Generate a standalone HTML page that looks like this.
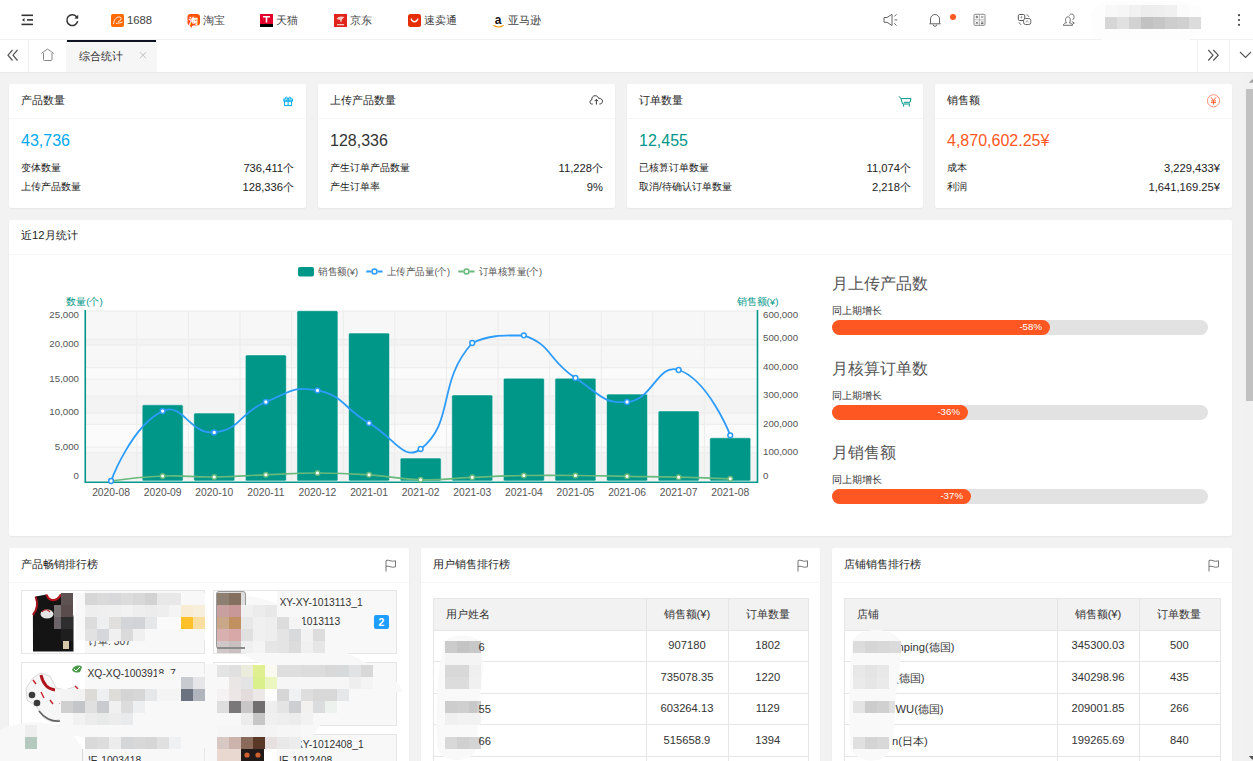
<!DOCTYPE html>
<html><head><meta charset="utf-8">
<style>
*{box-sizing:border-box;margin:0;padding:0}
html,body{width:1253px;height:761px;overflow:hidden;background:#f2f2f2;font-family:"Liberation Sans",sans-serif;color:#333}
.abs{position:absolute}
#top{position:absolute;left:0;top:0;width:1253px;height:40px;background:#fff;border-bottom:1px solid #f0f0f0}
#tabs{position:absolute;left:0;top:40px;width:1253px;height:33px;background:#fff;border-bottom:1px solid #e8e8e8}
.brand{position:absolute;top:13px;height:14px;font-size:11.3px;line-height:14px;color:#444;white-space:nowrap}
.card{position:absolute;background:#fff;border-radius:2px;box-shadow:0 1px 2px rgba(0,0,0,.05)}
.ch{position:absolute;left:0;top:0;right:0;height:35px;border-bottom:1px solid #f6f6f6;font-size:11.3px;line-height:32px;padding-left:12px;color:#222}
.big{position:absolute;left:12px;top:127px;font-size:16px;line-height:24px}
.row{position:absolute;left:12px;right:12px;font-size:10.3px;line-height:14px;color:#222}
.row span{position:absolute;right:0;top:0;font-size:11.2px;line-height:14px}
.pg{position:absolute;left:832px;width:376px;height:15px;border-radius:8px;background:#e2e2e2}
.pg div{position:absolute;left:0;top:0;height:15px;border-radius:8px;background:#ff5722}
.pg b{position:absolute;right:8px;top:-1.5px;font-weight:normal;font-size:9.7px;line-height:15px;color:#fff}
.tx{position:absolute;font-size:11.2px;line-height:14px;color:#333;white-space:nowrap}
.tx.c{text-align:center}
</style></head><body>

<!-- TOP BAR -->
<div id="top">
  <svg class="abs" style="left:0;top:0" width="1253" height="40">
    <!-- menu icon -->
    <g stroke="#333" stroke-width="1.6" fill="none">
      <line x1="21.5" y1="15.3" x2="33" y2="15.3"/>
      <line x1="27" y1="19.9" x2="33" y2="19.9"/>
      <line x1="21.5" y1="24.4" x2="33" y2="24.4"/>
    </g>
    <path d="M22,19.9 L24.5,18 L24.5,21.8Z" fill="#333"/>
    <!-- refresh -->
    <path d="M76.8,17.2 A5.4,5.4 0 1 0 77.6,21.2" stroke="#333" stroke-width="1.5" fill="none"/>
    <path d="M78.2,14.8 L78.2,18.8 L74.3,18.4Z" fill="#333"/>
    <!-- 1688 -->
    <rect x="111" y="14" width="13" height="13" rx="2" fill="#ff6a00"/>
    <path d="M113.5,24 C114,19 117,16.5 120,17 C122,17.5 121,21 118,22 M116,23.5 C118,23 121,23 122.5,22" stroke="#fff" stroke-width="0.9" fill="none"/>
    <!-- taobao -->
    <rect x="187.5" y="14" width="12.5" height="11.5" rx="3" fill="#ff5000"/>
    <path d="M190,25 L191,28 L193,25Z" fill="#ff5000"/>
    <text x="193.8" y="23.5" font-size="9" fill="#fff" text-anchor="middle" font-weight="bold">淘</text>
    <!-- tmall -->
    <rect x="260" y="14" width="13" height="10" fill="#e4002b"/>
    <rect x="260" y="24" width="13" height="3" fill="#000"/>
    <path d="M263,16.8 L270,16.8 M266.5,16.8 L266.5,22.5" stroke="#fff" stroke-width="1.6"/>
    <!-- jd -->
    <rect x="334" y="14" width="13" height="13" fill="#e1251b"/>
    <path d="M336.5,19 C338,16 342,16 344.5,17 L342,19.5 L341,23 L340,20 C339,19.5 337.5,19.5 336.5,19Z" fill="#f5c9c6"/>
    <rect x="337" y="24" width="7" height="1.3" fill="#f5c9c6"/>
    <!-- aliexpress -->
    <rect x="408" y="14" width="13" height="13" rx="2.5" fill="#e62e04"/>
    <path d="M411,18.5 C412.5,23 416.5,23 418,18.5" stroke="#fff" stroke-width="1.2" fill="none"/>
    <!-- amazon -->
    <text x="498" y="24" font-size="12" font-weight="bold" fill="#111" text-anchor="middle">a</text>
    <path d="M493.5,25.5 C497,27.5 500.5,27.5 503.5,25.3" stroke="#f90" stroke-width="1.2" fill="none"/>
    <!-- speaker -->
    <path d="M884,17.5 L887,17.5 L892,14.3 L892,25.5 L887,22.3 L884,22.3Z" stroke="#666" stroke-width="1" fill="none" stroke-linejoin="round"/>
    <path d="M894.3,16.5 L896.5,14.3 M894.5,19.9 L897.3,19.9 M894.3,23.3 L896.5,25.5" stroke="#666" stroke-width="1"/>
    <!-- bell -->
    <path d="M930.5,23.8 L930.5,19 A4.5,4.5 0 0 1 939.5,19 L939.5,23.8 M929.3,23.8 L940.7,23.8 M933.2,24.5 A1.8,1.8 0 0 0 936.8,24.5" stroke="#666" stroke-width="1" fill="none"/>
    <circle cx="953" cy="17" r="3" fill="#ff5722"/>
    <!-- calculator -->
    <rect x="974" y="14.3" width="11" height="11" rx="1" stroke="#888" stroke-width="1" fill="none"/>
    <path d="M979.5,14.5 L979.5,25 M974.3,19.8 L984.8,19.8" stroke="#aaa" stroke-width="0.8"/>
    <path d="M975.6,17 L978.2,17 M976.9,15.7 L976.9,18.3 M980.9,17 L983.5,17 M975.9,21.7 L978,23.8 M978,21.7 L975.9,23.8 M980.9,22 L983.5,22 M980.9,23.6 L983.5,23.6" stroke="#555" stroke-width="0.9"/>
    <!-- translate -->
    <rect x="1018.3" y="14.5" width="6.5" height="6" rx="1.3" stroke="#555" stroke-width="1" fill="none"/>
    <rect x="1023.6" y="18.5" width="7.2" height="6" rx="2" stroke="#666" stroke-width="1" fill="#fff"/>
    <path d="M1021.5,16 V18.5 M1020.3,17.3 H1022.7 M1025.8,22.5 L1027.2,20.3 L1028.6,22.5" stroke="#888" stroke-width="0.7" fill="none"/>
    <path d="M1026.5,14.8 C1027.8,15 1028.6,15.8 1028.8,17 M1019,22.3 C1019.2,23.5 1020,24.2 1021.3,24.5" stroke="#666" stroke-width="0.9" fill="none"/>
    <!-- user -->
    <path d="M1069.5,15.5 C1070,14.2 1071,14 1072,14 C1073.5,14 1074.3,15.5 1074,17.5 C1073.8,18.8 1073.2,19.5 1072.5,20" stroke="#666" stroke-width="0.9" fill="none"/>
    <path d="M1066.6,23 C1065,21.5 1065,17 1067.8,16.8 C1070.6,16.6 1071,21 1069.3,23" stroke="#666" stroke-width="0.95" fill="#fff"/>
    <path d="M1063.3,25.3 C1063.6,23.5 1065,23 1066.6,22.8 M1069.3,22.8 C1071,23 1072,23.5 1072.5,25.3 H1063.3" stroke="#666" stroke-width="0.95" fill="none"/>
    <path d="M1071.8,21.5 L1074.3,23 L1072,24.6" stroke="#666" stroke-width="0.9" fill="none"/>
    <!-- kebab -->
    <circle cx="1239" cy="15.2" r="1.1" fill="#444"/>
    <circle cx="1239" cy="20" r="1.1" fill="#444"/>
    <circle cx="1239" cy="24.8" r="1.1" fill="#444"/>
  </svg>
  <div class="brand" style="left:127px">1688</div>
  <div class="brand" style="left:202.5px">淘宝</div>
  <div class="brand" style="left:276px">天猫</div>
  <div class="brand" style="left:349.5px">京东</div>
  <div class="brand" style="left:423.5px">速卖通</div>
  <div class="brand" style="left:507.5px">亚马逊</div>
  <!-- mosaic username -->
  <div class="abs" style="left:1090px;top:1px;width:112px;height:40px;border-radius:20px;background:#fdfdfd"></div>
  <div class="abs" style="left:1105px;top:5px;width:96px;height:12px;display:flex">
    <i style="flex:1;background:#f8f8f8"></i><i style="flex:1;background:#f6f6f6"></i><i style="flex:1;background:#f1f1f1"></i><i style="flex:1;background:#ededed"></i><i style="flex:1;background:#eeeeee"></i><i style="flex:1;background:#f0f0f0"></i><i style="flex:1;background:#fbfbfb"></i><i style="flex:1;background:#fdfdfd"></i>
  </div>
  <div class="abs" style="left:1105px;top:17px;width:96px;height:12px;display:flex">
    <i style="flex:1;background:#d6d6d6"></i><i style="flex:1;background:#e0e0e0"></i><i style="flex:1;background:#d2d2d2"></i><i style="flex:1;background:#c2c2c2"></i><i style="flex:1;background:#c6c6c6"></i><i style="flex:1;background:#cdcdcd"></i><i style="flex:1;background:#d0d0d0"></i><i style="flex:1;background:#dcdcdc"></i>
  </div>
</div>

<!-- TABS -->
<div id="tabs">
  <div class="abs" style="left:28px;top:0;width:1px;height:32px;background:#f0f0f0"></div>
  <div class="abs" style="left:66px;top:0;width:91px;height:32px;background:#f6f6f6"></div>
  <div class="abs" style="left:67px;top:0;width:89px;height:2px;background:#0f1220"></div>
  <div class="abs" style="left:78.5px;top:9px;font-size:11.3px;line-height:14px;color:#333">综合统计</div>
  <div class="abs" style="left:1197px;top:0;width:1px;height:32px;background:#f0f0f0"></div>
  <div class="abs" style="left:1229px;top:0;width:1px;height:32px;background:#f0f0f0"></div>
  <svg class="abs" style="left:0;top:0" width="1253" height="32">
    <path d="M12.5,10 L8,15.2 L12.5,20.5 M17.5,10 L13,15.2 L17.5,20.5" stroke="#555" stroke-width="1.2" fill="none"/>
    <path d="M41.2,13.5 L47.5,9 L53.8,13.5 M43.5,13 V19.5 Q43.5,20.5 44.5,20.5 H51 Q52,20.5 52,19.5 V13" stroke="#888" stroke-width="1" fill="none"/>
    <path d="M140,12.2 L146,18.2 M146,12.2 L140,18.2" stroke="#c2c2c2" stroke-width="1"/>
    <path d="M1208.3,10 L1213,15.2 L1208.3,20.5 M1213.3,10 L1218.2,15.2 L1213.3,20.5" stroke="#555" stroke-width="1.2" fill="none"/>
    <path d="M1240,12 L1245.5,17.5 L1251,12" stroke="#555" stroke-width="1.1" fill="none"/>
  </svg>
</div>

<!-- CARDS -->
<div class="card" style="left:9px;top:84px;width:297px;height:124px">
  <div class="ch">产品数量</div>
  <div class="big" style="top:45px;color:#01aaed">43,736</div>
  <div class="row" style="top:77px">变体数量<span>736,411个</span></div>
  <div class="row" style="top:96px">上传产品数量<span>128,336个</span></div>
</div>
<div class="card" style="left:318px;top:84px;width:297px;height:124px">
  <div class="ch">上传产品数量</div>
  <div class="big" style="top:45px;color:#333">128,336</div>
  <div class="row" style="top:77px">产生订单产品数量<span>11,228个</span></div>
  <div class="row" style="top:96px">产生订单率<span>9%</span></div>
</div>
<div class="card" style="left:627px;top:84px;width:296px;height:124px">
  <div class="ch">订单数量</div>
  <div class="big" style="top:45px;color:#009688">12,455</div>
  <div class="row" style="top:77px">已核算订单数量<span>11,074个</span></div>
  <div class="row" style="top:96px">取消/待确认订单数量<span>2,218个</span></div>
</div>
<div class="card" style="left:935px;top:84px;width:297px;height:124px">
  <div class="ch">销售额</div>
  <div class="big" style="top:45px;color:#ff5722">4,870,602.25¥</div>
  <div class="row" style="top:77px">成本<span>3,229,433¥</span></div>
  <div class="row" style="top:96px">利润<span>1,641,169.25¥</span></div>
</div>


<!-- CARD ICONS -->
<svg class="abs" style="left:0;top:0;pointer-events:none" width="1253" height="120">
  <g stroke="#01aaed" stroke-width="1" fill="none">
    <rect x="283.8" y="99" width="8.6" height="2"/>
    <rect x="284.6" y="101" width="7" height="4.6"/>
    <path d="M288.1,99 V105.6 M288.1,99 C287,96.5 285,96.3 285.6,98.6 M288.1,99 C289.2,96.5 291.2,96.3 290.6,98.6"/>
  </g>
  <path d="M592.8,104 H591.5 C589.5,104 589.5,100 591.8,100 C591.5,97.5 593,95.7 595.2,95.7 C597.3,95.7 598.2,97 598.5,98.2 C601,98.2 602.5,99.6 602.5,101.2 C602.5,103 601.3,104 599.8,104 H599.3 M596.4,104.5 V99.4 M594.6,101.2 L596.4,99.4 L598.2,101.2" stroke="#333" stroke-width="0.95" fill="none"/>
  <path d="M899,96.3 L900.8,98.3 L902.6,104 H910 M901.2,98.6 H911 L910,102.3 H903.8 M903.6,104.3 V106.6 M909.3,104.3 V106.6" stroke="#009688" stroke-width="1" fill="none"/>
  <circle cx="1213.5" cy="100.8" r="6.1" stroke="#ff7a55" stroke-width="0.8" fill="none"/>
  <path d="M1211,97.3 L1213.5,100.5 L1216,97.3 M1211,100.9 H1216 M1211,102.6 H1216 M1213.5,100.5 V104.6" stroke="#ff5722" stroke-width="0.9" fill="none"/>
</svg>

<!-- CHART PANEL -->
<div class="card" style="left:9px;top:220px;width:1223px;height:316px">
  <div class="ch" style="line-height:30px">近12月统计</div>
</div>

<!-- CHART SVG -->
<svg class="abs" style="left:0;top:0;pointer-events:none" width="1253" height="761">
<rect x="85.25" y="447.00" width="672.25" height="34.00" fill="rgba(170,170,170,0.07)"/>
<rect x="85.25" y="413.00" width="672.25" height="34.00" fill="rgba(170,170,170,0.028)"/>
<rect x="85.25" y="379.00" width="672.25" height="34.00" fill="rgba(170,170,170,0.07)"/>
<rect x="85.25" y="345.00" width="672.25" height="34.00" fill="rgba(170,170,170,0.028)"/>
<rect x="85.25" y="311.00" width="672.25" height="34.00" fill="rgba(170,170,170,0.07)"/>
<rect x="85.25" y="452.67" width="672.25" height="28.33" fill="rgba(170,170,170,0.07)"/>
<rect x="85.25" y="424.33" width="672.25" height="28.33" fill="rgba(170,170,170,0.028)"/>
<rect x="85.25" y="396.00" width="672.25" height="28.33" fill="rgba(170,170,170,0.07)"/>
<rect x="85.25" y="367.67" width="672.25" height="28.33" fill="rgba(170,170,170,0.028)"/>
<rect x="85.25" y="339.33" width="672.25" height="28.33" fill="rgba(170,170,170,0.07)"/>
<rect x="85.25" y="311.00" width="672.25" height="28.33" fill="rgba(170,170,170,0.028)"/>
<path d="M85.25,311.00 H757.50 M85.25,345.00 H757.50 M85.25,379.00 H757.50 M85.25,413.00 H757.50 M85.25,447.00 H757.50 M85.25,339.33 H757.50 M85.25,367.67 H757.50 M85.25,396.00 H757.50 M85.25,424.33 H757.50 M85.25,452.67 H757.50 M136.85,311.0 V481.0 M188.45,311.0 V481.0 M240.05,311.0 V481.0 M291.65,311.0 V481.0 M343.25,311.0 V481.0 M394.85,311.0 V481.0 M446.45,311.0 V481.0 M498.05,311.0 V481.0 M549.65,311.0 V481.0 M601.25,311.0 V481.0 M652.85,311.0 V481.0 M704.45,311.0 V481.0" stroke="#ececec" stroke-width="1" fill="none"/>
<path d="M142.15,479.5 V406.30 Q142.15,404.80 143.65,404.80 H181.65 Q183.15,404.80 183.15,406.30 V479.5 Q183.15,481.00 181.65,481.00 H143.65 Q142.15,481.00 142.15,479.50 Z" fill="#009688" stroke="rgba(255,255,255,0.7)" stroke-width="0.8"/>
<path d="M193.75,479.5 V414.50 Q193.75,413.00 195.25,413.00 H233.25 Q234.75,413.00 234.75,414.50 V479.5 Q234.75,481.00 233.25,481.00 H195.25 Q193.75,481.00 193.75,479.50 Z" fill="#009688" stroke="rgba(255,255,255,0.7)" stroke-width="0.8"/>
<path d="M245.35,479.5 V356.40 Q245.35,354.90 246.85,354.90 H284.85 Q286.35,354.90 286.35,356.40 V479.5 Q286.35,481.00 284.85,481.00 H246.85 Q245.35,481.00 245.35,479.50 Z" fill="#009688" stroke="rgba(255,255,255,0.7)" stroke-width="0.8"/>
<path d="M296.95,479.5 V312.20 Q296.95,310.70 298.45,310.70 H336.45 Q337.95,310.70 337.95,312.20 V479.5 Q337.95,481.00 336.45,481.00 H298.45 Q296.95,481.00 296.95,479.50 Z" fill="#009688" stroke="rgba(255,255,255,0.7)" stroke-width="0.8"/>
<path d="M348.55,479.5 V334.50 Q348.55,333.00 350.05,333.00 H388.05 Q389.55,333.00 389.55,334.50 V479.5 Q389.55,481.00 388.05,481.00 H350.05 Q348.55,481.00 348.55,479.50 Z" fill="#009688" stroke="rgba(255,255,255,0.7)" stroke-width="0.8"/>
<path d="M400.15,479.5 V459.50 Q400.15,458.00 401.65,458.00 H439.65 Q441.15,458.00 441.15,459.50 V479.5 Q441.15,481.00 439.65,481.00 H401.65 Q400.15,481.00 400.15,479.50 Z" fill="#009688" stroke="rgba(255,255,255,0.7)" stroke-width="0.8"/>
<path d="M451.75,479.5 V396.40 Q451.75,394.90 453.25,394.90 H491.25 Q492.75,394.90 492.75,396.40 V479.5 Q492.75,481.00 491.25,481.00 H453.25 Q451.75,481.00 451.75,479.50 Z" fill="#009688" stroke="rgba(255,255,255,0.7)" stroke-width="0.8"/>
<path d="M503.35,479.5 V379.70 Q503.35,378.20 504.85,378.20 H542.85 Q544.35,378.20 544.35,379.70 V479.5 Q544.35,481.00 542.85,481.00 H504.85 Q503.35,481.00 503.35,479.50 Z" fill="#009688" stroke="rgba(255,255,255,0.7)" stroke-width="0.8"/>
<path d="M554.95,479.5 V379.70 Q554.95,378.20 556.45,378.20 H594.45 Q595.95,378.20 595.95,379.70 V479.5 Q595.95,481.00 594.45,481.00 H556.45 Q554.95,481.00 554.95,479.50 Z" fill="#009688" stroke="rgba(255,255,255,0.7)" stroke-width="0.8"/>
<path d="M606.55,479.5 V395.60 Q606.55,394.10 608.05,394.10 H646.05 Q647.55,394.10 647.55,395.60 V479.5 Q647.55,481.00 646.05,481.00 H608.05 Q606.55,481.00 606.55,479.50 Z" fill="#009688" stroke="rgba(255,255,255,0.7)" stroke-width="0.8"/>
<path d="M658.15,479.5 V412.40 Q658.15,410.90 659.65,410.90 H697.65 Q699.15,410.90 699.15,412.40 V479.5 Q699.15,481.00 697.65,481.00 H659.65 Q658.15,481.00 658.15,479.50 Z" fill="#009688" stroke="rgba(255,255,255,0.7)" stroke-width="0.8"/>
<path d="M709.75,479.5 V439.30 Q709.75,437.80 711.25,437.80 H749.25 Q750.75,437.80 750.75,439.30 V479.5 Q750.75,481.00 749.25,481.00 H711.25 Q709.75,481.00 709.75,479.50 Z" fill="#009688" stroke="rgba(255,255,255,0.7)" stroke-width="0.8"/>
<path d="M85.25,310.0 V482.3 H757.5 V310.0" stroke="#009688" stroke-width="1.6" fill="none"/>
<path d="M111.05,481.00 C111.05,481.00 136.79,477.00 162.65,476.00 C188.39,475.00 188.46,477.30 214.25,477.00 C240.06,476.70 240.05,475.80 265.85,474.80 C291.65,473.80 291.65,473.00 317.45,473.00 C343.25,473.00 343.30,473.10 369.05,474.80 C394.90,476.50 394.80,479.17 420.65,479.80 C446.40,480.42 446.44,478.38 472.25,477.30 C498.04,476.23 498.04,475.95 523.85,475.50 C549.64,475.05 549.65,475.30 575.45,475.50 C601.25,475.70 601.25,475.88 627.05,476.30 C652.85,476.73 652.85,476.58 678.65,477.20 C704.45,477.83 730.25,478.80 730.25,478.80" stroke="#68b97c" stroke-width="1.7" fill="none"/>
<path d="M111.05,481.00 C111.05,481.00 131.23,425.89 162.65,411.10 C182.83,401.59 189.36,434.60 214.25,432.40 C240.96,430.05 238.45,413.15 265.85,402.00 C290.05,392.15 293.51,385.50 317.45,390.40 C345.11,396.05 342.52,408.04 369.05,423.10 C394.12,437.34 403.69,462.17 420.65,449.00 C455.29,422.12 436.48,382.41 472.25,343.00 C488.08,335.30 501.26,335.30 523.85,335.30 C552.86,345.14 547.55,359.97 575.45,378.00 C599.15,393.32 602.09,403.94 627.05,402.00 C653.69,399.94 656.88,362.98 678.65,370.00 C708.48,379.63 730.25,435.30 730.25,435.30" stroke="#2b9bfc" stroke-width="1.8" fill="none"/>
<circle cx="111.05" cy="481.00" r="2.3" fill="#fff" stroke="#68b97c" stroke-width="1.4"/>
<circle cx="162.65" cy="476.00" r="2.3" fill="#fff" stroke="#68b97c" stroke-width="1.4"/>
<circle cx="214.25" cy="477.00" r="2.3" fill="#fff" stroke="#68b97c" stroke-width="1.4"/>
<circle cx="265.85" cy="474.80" r="2.3" fill="#fff" stroke="#68b97c" stroke-width="1.4"/>
<circle cx="317.45" cy="473.00" r="2.3" fill="#fff" stroke="#68b97c" stroke-width="1.4"/>
<circle cx="369.05" cy="474.80" r="2.3" fill="#fff" stroke="#68b97c" stroke-width="1.4"/>
<circle cx="420.65" cy="479.80" r="2.3" fill="#fff" stroke="#68b97c" stroke-width="1.4"/>
<circle cx="472.25" cy="477.30" r="2.3" fill="#fff" stroke="#68b97c" stroke-width="1.4"/>
<circle cx="523.85" cy="475.50" r="2.3" fill="#fff" stroke="#68b97c" stroke-width="1.4"/>
<circle cx="575.45" cy="475.50" r="2.3" fill="#fff" stroke="#68b97c" stroke-width="1.4"/>
<circle cx="627.05" cy="476.30" r="2.3" fill="#fff" stroke="#68b97c" stroke-width="1.4"/>
<circle cx="678.65" cy="477.20" r="2.3" fill="#fff" stroke="#68b97c" stroke-width="1.4"/>
<circle cx="730.25" cy="478.80" r="2.3" fill="#fff" stroke="#68b97c" stroke-width="1.4"/>
<circle cx="111.05" cy="481.00" r="2.4" fill="#fff" stroke="#2b9bfc" stroke-width="1.5"/>
<circle cx="162.65" cy="411.10" r="2.4" fill="#fff" stroke="#2b9bfc" stroke-width="1.5"/>
<circle cx="214.25" cy="432.40" r="2.4" fill="#fff" stroke="#2b9bfc" stroke-width="1.5"/>
<circle cx="265.85" cy="402.00" r="2.4" fill="#fff" stroke="#2b9bfc" stroke-width="1.5"/>
<circle cx="317.45" cy="390.40" r="2.4" fill="#fff" stroke="#2b9bfc" stroke-width="1.5"/>
<circle cx="369.05" cy="423.10" r="2.4" fill="#fff" stroke="#2b9bfc" stroke-width="1.5"/>
<circle cx="420.65" cy="449.00" r="2.4" fill="#fff" stroke="#2b9bfc" stroke-width="1.5"/>
<circle cx="472.25" cy="343.00" r="2.4" fill="#fff" stroke="#2b9bfc" stroke-width="1.5"/>
<circle cx="523.85" cy="335.30" r="2.4" fill="#fff" stroke="#2b9bfc" stroke-width="1.5"/>
<circle cx="575.45" cy="378.00" r="2.4" fill="#fff" stroke="#2b9bfc" stroke-width="1.5"/>
<circle cx="627.05" cy="402.00" r="2.4" fill="#fff" stroke="#2b9bfc" stroke-width="1.5"/>
<circle cx="678.65" cy="370.00" r="2.4" fill="#fff" stroke="#2b9bfc" stroke-width="1.5"/>
<circle cx="730.25" cy="435.30" r="2.4" fill="#fff" stroke="#2b9bfc" stroke-width="1.5"/>
<text x="111.05" y="495.8" text-anchor="middle" font-size="10.3" fill="#555">2020-08</text>
<text x="162.65" y="495.8" text-anchor="middle" font-size="10.3" fill="#555">2020-09</text>
<text x="214.25" y="495.8" text-anchor="middle" font-size="10.3" fill="#555">2020-10</text>
<text x="265.85" y="495.8" text-anchor="middle" font-size="10.3" fill="#555">2020-11</text>
<text x="317.45" y="495.8" text-anchor="middle" font-size="10.3" fill="#555">2020-12</text>
<text x="369.05" y="495.8" text-anchor="middle" font-size="10.3" fill="#555">2021-01</text>
<text x="420.65" y="495.8" text-anchor="middle" font-size="10.3" fill="#555">2021-02</text>
<text x="472.25" y="495.8" text-anchor="middle" font-size="10.3" fill="#555">2021-03</text>
<text x="523.85" y="495.8" text-anchor="middle" font-size="10.3" fill="#555">2021-04</text>
<text x="575.45" y="495.8" text-anchor="middle" font-size="10.3" fill="#555">2021-05</text>
<text x="627.05" y="495.8" text-anchor="middle" font-size="10.3" fill="#555">2021-06</text>
<text x="678.65" y="495.8" text-anchor="middle" font-size="10.3" fill="#555">2021-07</text>
<text x="730.25" y="495.8" text-anchor="middle" font-size="10.3" fill="#555">2021-08</text>
<text x="79" y="318.0" text-anchor="end" font-size="9.7" fill="#555">25,000</text>
<text x="79" y="346.9" text-anchor="end" font-size="9.7" fill="#555">20,000</text>
<text x="79" y="381.7" text-anchor="end" font-size="9.7" fill="#555">15,000</text>
<text x="79" y="415.1" text-anchor="end" font-size="9.7" fill="#555">10,000</text>
<text x="79" y="449.5" text-anchor="end" font-size="9.7" fill="#555">5,000</text>
<text x="79" y="479.1" text-anchor="end" font-size="9.7" fill="#555">0</text>
<text x="763" y="317.8" font-size="9.7" fill="#555">600,000</text>
<text x="763" y="341.3" font-size="9.7" fill="#555">500,000</text>
<text x="763" y="370.0" font-size="9.7" fill="#555">400,000</text>
<text x="763" y="398.4" font-size="9.7" fill="#555">300,000</text>
<text x="763" y="427.1" font-size="9.7" fill="#555">200,000</text>
<text x="763" y="455.0" font-size="9.7" fill="#555">100,000</text>
<text x="763" y="479.0" font-size="9.7" fill="#555">0</text>
<text x="84.5" y="304.5" text-anchor="middle" font-size="9.7" fill="#009688">数量(个)</text>
<text x="757.5" y="304.5" text-anchor="middle" font-size="9.7" fill="#009688">销售额(¥)</text>
<rect x="298" y="267" width="16" height="9.5" rx="2" fill="#009688"/>
<text x="318" y="275" font-size="9.7" fill="#555" textLength="40" lengthAdjust="spacingAndGlyphs">销售额(¥)</text>
<path d="M366.3,271.5 H371 M378,271.5 H382.5" stroke="#2b9bfc" stroke-width="1.8"/><circle cx="374.5" cy="271.5" r="2.5" fill="#fff" stroke="#2b9bfc" stroke-width="1.6"/>
<text x="387" y="275" font-size="9.7" fill="#555" textLength="63" lengthAdjust="spacingAndGlyphs">上传产品量(个)</text>
<path d="M458.3,271.5 H463 M470,271.5 H474.5" stroke="#68b97c" stroke-width="1.8"/><circle cx="466.5" cy="271.5" r="2.5" fill="#fff" stroke="#68b97c" stroke-width="1.6"/>
<text x="478.5" y="275" font-size="9.7" fill="#555" textLength="63.5" lengthAdjust="spacingAndGlyphs">订单核算量(个)</text>
</svg>
<!-- /CHART SVG -->

<!-- RIGHT STATS -->
<div class="abs" style="left:832px;top:272px;font-size:16.2px;line-height:22px;color:#555">月上传产品数</div>
<div class="abs" style="left:832px;top:304px;font-size:9.9px;line-height:13px;color:#333">同上期增长</div>
<div class="pg" style="top:320px"><div style="width:218px"><b>-58%</b></div></div>
<div class="abs" style="left:832px;top:357px;font-size:16.2px;line-height:22px;color:#555">月核算订单数</div>
<div class="abs" style="left:832px;top:389px;font-size:9.9px;line-height:13px;color:#333">同上期增长</div>
<div class="pg" style="top:405px"><div style="width:136px"><b>-36%</b></div></div>
<div class="abs" style="left:832px;top:441px;font-size:16.2px;line-height:22px;color:#555">月销售额</div>
<div class="abs" style="left:832px;top:473px;font-size:9.9px;line-height:13px;color:#333">同上期增长</div>
<div class="pg" style="top:489px"><div style="width:139px"><b>-37%</b></div></div>


<!-- BOTTOM PANELS -->
<div class="card" style="left:9px;top:548px;width:400px;height:230px">
  <div class="ch">产品畅销排行榜</div>
</div>
<div class="card" style="left:421px;top:548px;width:399px;height:230px">
  <div class="ch">用户销售排行榜</div>
</div>
<div class="card" style="left:832px;top:548px;width:400px;height:230px">
  <div class="ch">店铺销售排行榜</div>
</div>

<!-- BOTTOM CONTENT -->
<svg class="abs" style="left:385px;top:559px" width="12" height="13"><path d="M1,12.5 V1.5 C3.5,0 6,3.5 10.5,1.8 V7.8 C6.5,9.5 3.5,6 1,7.5" stroke="#666" stroke-width="0.9" fill="none"/></svg>
<svg class="abs" style="left:797px;top:559px" width="12" height="13"><path d="M1,12.5 V1.5 C3.5,0 6,3.5 10.5,1.8 V7.8 C6.5,9.5 3.5,6 1,7.5" stroke="#666" stroke-width="0.9" fill="none"/></svg>
<svg class="abs" style="left:1208px;top:559px" width="12" height="13"><path d="M1,12.5 V1.5 C3.5,0 6,3.5 10.5,1.8 V7.8 C6.5,9.5 3.5,6 1,7.5" stroke="#666" stroke-width="0.9" fill="none"/></svg>
<div class="abs" style="left:21px;top:590px;width:184px;height:64px;border:1px solid #e6e6e6;background:#f8f8f8"></div>
<div class="abs" style="left:22px;top:591px;width:63px;height:62px;background:#fff"></div>
<div class="abs" style="left:213px;top:590px;width:184px;height:64px;border:1px solid #e6e6e6;background:#f8f8f8"></div>
<div class="abs" style="left:214px;top:591px;width:63px;height:62px;background:#fff"></div>
<div class="abs" style="left:21px;top:662px;width:184px;height:64px;border:1px solid #e6e6e6;background:#f8f8f8"></div>
<div class="abs" style="left:22px;top:663px;width:63px;height:62px;background:#fff"></div>
<div class="abs" style="left:213px;top:662px;width:184px;height:64px;border:1px solid #e6e6e6;background:#f8f8f8"></div>
<div class="abs" style="left:214px;top:663px;width:63px;height:62px;background:#fff"></div>
<div class="abs" style="left:21px;top:734px;width:184px;height:64px;border:1px solid #e6e6e6;background:#f8f8f8"></div>
<div class="abs" style="left:22px;top:735px;width:63px;height:62px;background:#fff"></div>
<div class="abs" style="left:213px;top:734px;width:184px;height:64px;border:1px solid #e6e6e6;background:#f8f8f8"></div>
<div class="abs" style="left:214px;top:735px;width:63px;height:62px;background:#fff"></div>
<svg class="abs" style="left:30px;top:591px" width="48" height="62"><path d="M5.6,5.5 L16.5,3.5 C19,10 27,10 31,3.2 L37.5,5 C38,14 43,20 43.5,26 L43.5,60.5 L3,60.5 L2.9,24 C8,18 8,12 5.6,5.5Z" fill="#141414"/><path d="M16.5,3.5 C19,11 27,11 31,3.2" stroke="#b8141e" stroke-width="2.2" fill="none"/><path d="M5.6,5.5 C8,12 8,18 2.9,24" stroke="#a3121c" stroke-width="2" fill="none"/><ellipse cx="17" cy="23" rx="6.5" ry="4.5" fill="#e4e4e4"/><path d="M12,21 C14,18 18,18 20,21" stroke="#b8141e" stroke-width="1.2" fill="none"/><rect x="33" y="50" width="6" height="8" fill="#d4c8a8"/></svg>
<div class="abs" style="left:61px;top:593px;width:12px;height:12px;background:#5e5252"></div>
<div class="abs" style="left:54px;top:605px;width:7px;height:12px;background:#7a7474"></div>
<div class="abs" style="left:61px;top:605px;width:12px;height:12px;background:#5a4c4c"></div>
<div class="abs" style="left:54px;top:617px;width:7px;height:12px;background:#6a6468"></div>
<div class="abs" style="left:61px;top:617px;width:12px;height:12px;background:#2e2e2e"></div>
<div class="abs" style="left:61px;top:629px;width:12px;height:12px;background:#1e1e1e"></div>
<svg class="abs" style="left:0;top:0" width="90" height="761"><path d="M26,688 L33,678 L40,673 L50,676 L56,688 L65,690 L77,686 L79,692 L70,705 L62,718 L52,722 L44,718 L36,706 L27,700Z" fill="#f6f6f6" stroke="#d0d0d0" stroke-width="0.8"/><path d="M41,675 C43,684 47,689 55,690" stroke="#b0141c" stroke-width="3" fill="none"/><path d="M33,680 L36,684 M41,692 L44,698 M50,700 L53,704 M60,704 L62,700 M67,694 L72,690 M75,686 L78,689" stroke="#c8202a" stroke-width="1.4"/><circle cx="32" cy="695" r="3.3" fill="#3a3a3a"/><circle cx="37" cy="703" r="3.3" fill="#3a3a3a"/><path d="M39,711 C44,718 52,722 60,721" stroke="#606060" stroke-width="1.6" fill="none"/></svg>
<svg class="abs" style="left:71px;top:664px" width="12" height="10"><path d="M1,6 C2,2 8,0 11,3 L9,8 C6,9 3,9 1,6Z" fill="#4a9a4a"/><path d="M3,5 L5,7 L9,3" stroke="#fff" stroke-width="1" fill="none"/></svg>
<div class="abs" style="left:216px;top:591px;width:30px;height:58px;border:1px solid #999;border-radius:3px;background:#ddd"></div>
<svg class="abs" style="left:214px;top:749px" width="50" height="12"><rect x="0" y="0" width="27" height="12" fill="#e8d8d0"/><rect x="27" y="0" width="34" height="12" fill="#221a18"/><circle cx="33" cy="6" r="2.6" fill="#d06030"/><circle cx="44" cy="6" r="2.6" fill="#d06030"/></svg>
<div class="abs" style="left:88px;top:635px;font-size:10.3px;line-height:13px;color:#333;white-space:nowrap"><span style="color:#444">订单: 307</span></div>
<div class="abs" style="left:279.5px;top:596px;font-size:10.3px;line-height:13px;color:#333;white-space:nowrap">XY-XY-1013113_1</div>
<div class="abs" style="left:301px;top:615px;font-size:10.3px;line-height:13px;color:#333;white-space:nowrap">1013113</div>
<div class="abs" style="left:87.5px;top:667px;font-size:10.3px;line-height:13px;color:#333;white-space:nowrap">XQ-XQ-1003918_7</div>
<div class="abs" style="left:296px;top:738px;font-size:10.3px;line-height:13px;color:#333;white-space:nowrap">XY-1012408_1</div>
<div class="abs" style="left:279px;top:754px;font-size:10.3px;line-height:13px;color:#333;white-space:nowrap">IE-1012408</div>
<div class="abs" style="left:88px;top:754px;font-size:10.3px;line-height:13px;color:#333;white-space:nowrap">IE-1003418</div>
<svg class="abs" style="left:0;top:580px" width="420" height="181"><g fill="#f8f8f8"><path d="M76,13 H205 V60 H76Z"/><path d="M85,49 H170 V60 H85Z"/><path d="M246,16 C270,18 292,28 304,45 C320,62 360,78 384,92 C396,100 402,106 402,112 L330,112 C300,100 270,90 246,76Z"/><path d="M157,94 H217 V108 H157Z"/><path d="M60,120 C70,112 200,108 240,112 L320,120 C330,136 320,152 300,162 C250,172 120,170 60,152Z"/><path d="M205,84 H217 V181 H205Z"/><path d="M0,150 C20,140 50,140 70,150 L90,181 H0Z"/></g></svg>
<div class="abs" style="left:85px;top:593px;width:12px;height:12px;background:#d6d6d6"></div>
<div class="abs" style="left:97px;top:593px;width:12px;height:12px;background:#dadada"></div>
<div class="abs" style="left:109px;top:593px;width:12px;height:12px;background:#d8d8da"></div>
<div class="abs" style="left:121px;top:593px;width:12px;height:12px;background:#dcdcdc"></div>
<div class="abs" style="left:133px;top:593px;width:12px;height:12px;background:#d8d8d8"></div>
<div class="abs" style="left:145px;top:593px;width:12px;height:12px;background:#d2d2d2"></div>
<div class="abs" style="left:157px;top:593px;width:12px;height:12px;background:#e8e8e8"></div>
<div class="abs" style="left:169px;top:593px;width:12px;height:12px;background:#e8e8e8"></div>
<div class="abs" style="left:85px;top:605px;width:12px;height:12px;background:#eeeeee"></div>
<div class="abs" style="left:97px;top:605px;width:12px;height:12px;background:#efefef"></div>
<div class="abs" style="left:109px;top:605px;width:12px;height:12px;background:#f0f0f0"></div>
<div class="abs" style="left:121px;top:605px;width:12px;height:12px;background:#f2f2f2"></div>
<div class="abs" style="left:133px;top:605px;width:12px;height:12px;background:#eeeeee"></div>
<div class="abs" style="left:145px;top:605px;width:12px;height:12px;background:#ececec"></div>
<div class="abs" style="left:157px;top:605px;width:12px;height:12px;background:#eeeeee"></div>
<div class="abs" style="left:169px;top:605px;width:12px;height:12px;background:#f4f4f4"></div>
<div class="abs" style="left:181px;top:605px;width:12px;height:12px;background:#f8ecd4"></div>
<div class="abs" style="left:193px;top:605px;width:12px;height:12px;background:#f7eedc"></div>
<div class="abs" style="left:85px;top:617px;width:12px;height:12px;background:#dcdcdc"></div>
<div class="abs" style="left:97px;top:617px;width:12px;height:12px;background:#eeeff1"></div>
<div class="abs" style="left:109px;top:617px;width:12px;height:12px;background:#e0dfdd"></div>
<div class="abs" style="left:121px;top:617px;width:12px;height:12px;background:#d4d5d9"></div>
<div class="abs" style="left:133px;top:617px;width:12px;height:12px;background:#d2d3d6"></div>
<div class="abs" style="left:145px;top:617px;width:12px;height:12px;background:#e6e7e8"></div>
<div class="abs" style="left:157px;top:617px;width:12px;height:12px;background:#fafafa"></div>
<div class="abs" style="left:169px;top:617px;width:12px;height:12px;background:#fafafa"></div>
<div class="abs" style="left:181px;top:617px;width:12px;height:12px;background:#ffc02a"></div>
<div class="abs" style="left:193px;top:617px;width:12px;height:12px;background:#f8dfa0"></div>
<div class="abs" style="left:85px;top:629px;width:12px;height:12px;background:#e2e2e2"></div>
<div class="abs" style="left:97px;top:629px;width:12px;height:12px;background:#d6d7da"></div>
<div class="abs" style="left:109px;top:629px;width:12px;height:12px;background:#f0f0f0"></div>
<div class="abs" style="left:121px;top:629px;width:12px;height:12px;background:#dadada"></div>
<div class="abs" style="left:133px;top:629px;width:12px;height:12px;background:#f0f0f0"></div>
<div class="abs" style="left:217px;top:593px;width:12px;height:12px;background:#8e8070"></div>
<div class="abs" style="left:229px;top:593px;width:12px;height:12px;background:#857060"></div>
<div class="abs" style="left:217px;top:605px;width:12px;height:12px;background:#c8a0a0"></div>
<div class="abs" style="left:229px;top:605px;width:12px;height:12px;background:#c89898"></div>
<div class="abs" style="left:241px;top:605px;width:12px;height:12px;background:#f0f0f0"></div>
<div class="abs" style="left:253px;top:605px;width:12px;height:12px;background:#ececec"></div>
<div class="abs" style="left:265px;top:605px;width:12px;height:12px;background:#e8e8e8"></div>
<div class="abs" style="left:217px;top:617px;width:12px;height:12px;background:#c8a888"></div>
<div class="abs" style="left:229px;top:617px;width:12px;height:12px;background:#c09060"></div>
<div class="abs" style="left:241px;top:617px;width:12px;height:12px;background:#e8e8e8"></div>
<div class="abs" style="left:253px;top:617px;width:12px;height:12px;background:#f0f0f0"></div>
<div class="abs" style="left:265px;top:617px;width:12px;height:12px;background:#eeeeee"></div>
<div class="abs" style="left:277px;top:617px;width:12px;height:12px;background:#dcdcdc"></div>
<div class="abs" style="left:289px;top:617px;width:12px;height:12px;background:#f4f4f4"></div>
<div class="abs" style="left:217px;top:629px;width:12px;height:12px;background:#d8b0b0"></div>
<div class="abs" style="left:229px;top:629px;width:12px;height:12px;background:#d8a8a8"></div>
<div class="abs" style="left:241px;top:629px;width:12px;height:12px;background:#e0e0e0"></div>
<div class="abs" style="left:253px;top:629px;width:12px;height:12px;background:#f0f0f0"></div>
<div class="abs" style="left:265px;top:629px;width:12px;height:12px;background:#eeeeee"></div>
<div class="abs" style="left:277px;top:629px;width:12px;height:12px;background:#e4e4e4"></div>
<div class="abs" style="left:289px;top:629px;width:12px;height:12px;background:#d8d9db"></div>
<div class="abs" style="left:301px;top:629px;width:12px;height:12px;background:#f2f2f2"></div>
<div class="abs" style="left:313px;top:629px;width:12px;height:12px;background:#dcdcdc"></div>
<div class="abs" style="left:217px;top:641px;width:12px;height:12px;background:#d0c8c8"></div>
<div class="abs" style="left:229px;top:641px;width:12px;height:12px;background:#c8c0c0"></div>
<div class="abs" style="left:241px;top:641px;width:12px;height:12px;background:#f0f0f0"></div>
<div class="abs" style="left:253px;top:641px;width:12px;height:12px;background:#f4f4f4"></div>
<div class="abs" style="left:265px;top:641px;width:12px;height:12px;background:#e6e6e6"></div>
<div class="abs" style="left:277px;top:641px;width:12px;height:12px;background:#e4e4e4"></div>
<div class="abs" style="left:289px;top:641px;width:12px;height:12px;background:#dcdcdc"></div>
<div class="abs" style="left:301px;top:641px;width:12px;height:12px;background:#f0f0f0"></div>
<div class="abs" style="left:313px;top:641px;width:12px;height:12px;background:#e6e6e6"></div>
<div class="abs" style="left:217px;top:647px;width:28px;height:2px;background:#8a8a8a"></div>
<div class="abs" style="left:181px;top:677px;width:12px;height:12px;background:#c8cbd0"></div>
<div class="abs" style="left:193px;top:677px;width:12px;height:12px;background:#e6e6e8"></div>
<div class="abs" style="left:61px;top:689px;width:12px;height:12px;background:#f4f4f4"></div>
<div class="abs" style="left:73px;top:689px;width:12px;height:12px;background:#f2f2f2"></div>
<div class="abs" style="left:85px;top:689px;width:12px;height:12px;background:#dcdbd8"></div>
<div class="abs" style="left:97px;top:689px;width:12px;height:12px;background:#eeeff1"></div>
<div class="abs" style="left:109px;top:689px;width:12px;height:12px;background:#dddcd8"></div>
<div class="abs" style="left:121px;top:689px;width:12px;height:12px;background:#d4d4d4"></div>
<div class="abs" style="left:133px;top:689px;width:12px;height:12px;background:#d7d7d7"></div>
<div class="abs" style="left:145px;top:689px;width:12px;height:12px;background:#e6e7e9"></div>
<div class="abs" style="left:157px;top:689px;width:12px;height:12px;background:#f4f4f4"></div>
<div class="abs" style="left:169px;top:689px;width:12px;height:12px;background:#f4f4f4"></div>
<div class="abs" style="left:181px;top:689px;width:12px;height:12px;background:#6b7280"></div>
<div class="abs" style="left:193px;top:689px;width:12px;height:12px;background:#b0b5bd"></div>
<div class="abs" style="left:61px;top:701px;width:12px;height:12px;background:#cfcfcf"></div>
<div class="abs" style="left:73px;top:701px;width:12px;height:12px;background:#c4c5c8"></div>
<div class="abs" style="left:85px;top:701px;width:12px;height:12px;background:#e0e0e0"></div>
<div class="abs" style="left:97px;top:701px;width:12px;height:12px;background:#c9cacd"></div>
<div class="abs" style="left:109px;top:701px;width:12px;height:12px;background:#f0f0f0"></div>
<div class="abs" style="left:121px;top:701px;width:12px;height:12px;background:#dcdcdc"></div>
<div class="abs" style="left:133px;top:701px;width:12px;height:12px;background:#eeeff1"></div>
<div class="abs" style="left:73px;top:713px;width:12px;height:12px;background:#f2f2f2"></div>
<div class="abs" style="left:85px;top:713px;width:12px;height:12px;background:#ececec"></div>
<div class="abs" style="left:97px;top:713px;width:12px;height:12px;background:#e8eaea"></div>
<div class="abs" style="left:109px;top:713px;width:12px;height:12px;background:#ececec"></div>
<div class="abs" style="left:121px;top:713px;width:12px;height:12px;background:#e8eaec"></div>
<div class="abs" style="left:25px;top:725px;width:12px;height:12px;background:#eeeeee"></div>
<div class="abs" style="left:25px;top:737px;width:12px;height:12px;background:#b5c9bf"></div>
<div class="abs" style="left:85px;top:737px;width:12px;height:12px;background:#d9d9d9"></div>
<div class="abs" style="left:97px;top:737px;width:12px;height:12px;background:#dcdcdc"></div>
<div class="abs" style="left:109px;top:737px;width:12px;height:12px;background:#ececec"></div>
<div class="abs" style="left:121px;top:737px;width:12px;height:12px;background:#d4d6d8"></div>
<div class="abs" style="left:133px;top:737px;width:12px;height:12px;background:#d8d8d8"></div>
<div class="abs" style="left:145px;top:737px;width:12px;height:12px;background:#d6d6d6"></div>
<div class="abs" style="left:157px;top:737px;width:12px;height:12px;background:#e0e0e0"></div>
<div class="abs" style="left:169px;top:737px;width:12px;height:12px;background:#eef0f2"></div>
<div class="abs" style="left:82px;top:749px;width:1px;height:12px;background:#d8d8d8"></div>
<div class="abs" style="left:217px;top:665px;width:12px;height:12px;background:#e4e4e4"></div>
<div class="abs" style="left:229px;top:665px;width:12px;height:12px;background:#e0e0e0"></div>
<div class="abs" style="left:241px;top:665px;width:12px;height:12px;background:#ececdc"></div>
<div class="abs" style="left:253px;top:665px;width:12px;height:12px;background:#e0f090"></div>
<div class="abs" style="left:265px;top:665px;width:12px;height:12px;background:#fafaf0"></div>
<div class="abs" style="left:277px;top:665px;width:12px;height:12px;background:#dedede"></div>
<div class="abs" style="left:289px;top:665px;width:12px;height:12px;background:#dedede"></div>
<div class="abs" style="left:301px;top:665px;width:12px;height:12px;background:#dcdcdc"></div>
<div class="abs" style="left:313px;top:665px;width:12px;height:12px;background:#dcdcdc"></div>
<div class="abs" style="left:325px;top:665px;width:12px;height:12px;background:#d8d8d8"></div>
<div class="abs" style="left:337px;top:665px;width:12px;height:12px;background:#d6dada"></div>
<div class="abs" style="left:349px;top:665px;width:12px;height:12px;background:#e0e2e4"></div>
<div class="abs" style="left:361px;top:665px;width:12px;height:12px;background:#d8d8d8"></div>
<div class="abs" style="left:217px;top:677px;width:12px;height:12px;background:#f8f8f8"></div>
<div class="abs" style="left:229px;top:677px;width:12px;height:12px;background:#ebe6e6"></div>
<div class="abs" style="left:241px;top:677px;width:12px;height:12px;background:#e4e4e4"></div>
<div class="abs" style="left:253px;top:677px;width:12px;height:12px;background:#daf08a"></div>
<div class="abs" style="left:265px;top:677px;width:12px;height:12px;background:#eaf5c0"></div>
<div class="abs" style="left:277px;top:677px;width:12px;height:12px;background:#f6f6f6"></div>
<div class="abs" style="left:289px;top:677px;width:12px;height:12px;background:#f6f6f6"></div>
<div class="abs" style="left:301px;top:677px;width:12px;height:12px;background:#f6f6f6"></div>
<div class="abs" style="left:313px;top:677px;width:12px;height:12px;background:#f6f6f6"></div>
<div class="abs" style="left:325px;top:677px;width:12px;height:12px;background:#f6f6f6"></div>
<div class="abs" style="left:337px;top:677px;width:12px;height:12px;background:#f6f6f6"></div>
<div class="abs" style="left:349px;top:677px;width:12px;height:12px;background:#eeeeee"></div>
<div class="abs" style="left:361px;top:677px;width:12px;height:12px;background:#f4f4f4"></div>
<div class="abs" style="left:217px;top:689px;width:12px;height:12px;background:#f4f2f2"></div>
<div class="abs" style="left:229px;top:689px;width:12px;height:12px;background:#ede6e6"></div>
<div class="abs" style="left:241px;top:689px;width:12px;height:12px;background:#e4dcdc"></div>
<div class="abs" style="left:253px;top:689px;width:12px;height:12px;background:#ece8e8"></div>
<div class="abs" style="left:265px;top:689px;width:12px;height:12px;background:#fdfdfd"></div>
<div class="abs" style="left:277px;top:689px;width:12px;height:12px;background:#d6d6d6"></div>
<div class="abs" style="left:289px;top:689px;width:12px;height:12px;background:#eff1f3"></div>
<div class="abs" style="left:301px;top:689px;width:12px;height:12px;background:#dedede"></div>
<div class="abs" style="left:313px;top:689px;width:12px;height:12px;background:#d8d8d8"></div>
<div class="abs" style="left:325px;top:689px;width:12px;height:12px;background:#d8d8d8"></div>
<div class="abs" style="left:337px;top:689px;width:12px;height:12px;background:#e6e7e9"></div>
<div class="abs" style="left:217px;top:701px;width:12px;height:12px;background:#dedede"></div>
<div class="abs" style="left:229px;top:701px;width:12px;height:12px;background:#7a7878"></div>
<div class="abs" style="left:241px;top:701px;width:12px;height:12px;background:#c8c6c6"></div>
<div class="abs" style="left:253px;top:701px;width:12px;height:12px;background:#706e6e"></div>
<div class="abs" style="left:265px;top:701px;width:12px;height:12px;background:#eeeeee"></div>
<div class="abs" style="left:277px;top:701px;width:12px;height:12px;background:#e4e4e4"></div>
<div class="abs" style="left:289px;top:701px;width:12px;height:12px;background:#ccced2"></div>
<div class="abs" style="left:301px;top:701px;width:12px;height:12px;background:#f2f1ef"></div>
<div class="abs" style="left:313px;top:701px;width:12px;height:12px;background:#dadcde"></div>
<div class="abs" style="left:325px;top:701px;width:12px;height:12px;background:#eef2ef"></div>
<div class="abs" style="left:217px;top:713px;width:12px;height:12px;background:#f8f8f8"></div>
<div class="abs" style="left:229px;top:713px;width:12px;height:12px;background:#f8f8f8"></div>
<div class="abs" style="left:241px;top:713px;width:12px;height:12px;background:#ececec"></div>
<div class="abs" style="left:253px;top:713px;width:12px;height:12px;background:#c6c6c6"></div>
<div class="abs" style="left:265px;top:713px;width:12px;height:12px;background:#f0f0f0"></div>
<div class="abs" style="left:277px;top:713px;width:12px;height:12px;background:#eeeeee"></div>
<div class="abs" style="left:289px;top:713px;width:12px;height:12px;background:#ececec"></div>
<div class="abs" style="left:301px;top:713px;width:12px;height:12px;background:#f2f2f2"></div>
<div class="abs" style="left:217px;top:725px;width:12px;height:12px;background:#f6f6f6"></div>
<div class="abs" style="left:229px;top:725px;width:12px;height:12px;background:#f6f6f6"></div>
<div class="abs" style="left:241px;top:725px;width:12px;height:12px;background:#f4f4f4"></div>
<div class="abs" style="left:253px;top:725px;width:12px;height:12px;background:#f2f2f2"></div>
<div class="abs" style="left:265px;top:725px;width:12px;height:12px;background:#f4f4f4"></div>
<div class="abs" style="left:277px;top:725px;width:12px;height:12px;background:#f6f6f6"></div>
<div class="abs" style="left:289px;top:725px;width:12px;height:12px;background:#f6f6f6"></div>
<div class="abs" style="left:301px;top:725px;width:12px;height:12px;background:#f8f8f8"></div>
<div class="abs" style="left:217px;top:737px;width:12px;height:12px;background:#d8c8c4"></div>
<div class="abs" style="left:229px;top:737px;width:12px;height:12px;background:#ccb4ac"></div>
<div class="abs" style="left:241px;top:737px;width:12px;height:12px;background:#8a6a5a"></div>
<div class="abs" style="left:253px;top:737px;width:12px;height:12px;background:#5a3828"></div>
<div class="abs" style="left:265px;top:737px;width:12px;height:12px;background:#e6e0e0"></div>
<div class="abs" style="left:277px;top:737px;width:12px;height:12px;background:#e8e8e8"></div>
<div class="abs" style="left:289px;top:737px;width:12px;height:12px;background:#ececec"></div>
<div class="abs" style="left:374px;top:615px;width:15px;height:14px;background:#1e9fff;border-radius:2px;color:#fff;font-size:10.5px;font-weight:bold;line-height:14px;text-align:center">2</div>
<div class="abs" style="left:433px;top:598px;width:376px;height:173px;border:1px solid #e6e6e6;border-bottom:none;background:#fff"></div>
<div class="abs" style="left:434px;top:599px;width:374px;height:32px;background:#f2f2f2"></div>
<div class="abs" style="left:434px;top:630px;width:374px;height:1px;background:#e6e6e6"></div>
<div class="abs" style="left:434px;top:661px;width:374px;height:1px;background:#e6e6e6"></div>
<div class="abs" style="left:434px;top:693px;width:374px;height:1px;background:#e6e6e6"></div>
<div class="abs" style="left:434px;top:724px;width:374px;height:1px;background:#e6e6e6"></div>
<div class="abs" style="left:434px;top:756px;width:374px;height:1px;background:#e6e6e6"></div>
<div class="abs" style="left:646.4px;top:598px;width:1px;height:163px;background:#e6e6e6"></div>
<div class="abs" style="left:727.5px;top:598px;width:1px;height:163px;background:#e6e6e6"></div>
<div class="tx" style="left:446px;top:607px">用户姓名</div>
<div class="tx c" style="left:646.4px;width:81.10000000000002px;top:607px">销售额(¥)</div>
<div class="tx c" style="left:727.5px;width:80.5px;top:607px">订单数量</div>
<div class="tx c" style="left:646.4px;width:81.10000000000002px;top:638.3px">907180</div>
<div class="tx c" style="left:727.5px;width:80.5px;top:638.3px">1802</div>
<div class="tx c" style="left:646.4px;width:81.10000000000002px;top:669.8px">735078.35</div>
<div class="tx c" style="left:727.5px;width:80.5px;top:669.8px">1220</div>
<div class="tx c" style="left:646.4px;width:81.10000000000002px;top:701.3px">603264.13</div>
<div class="tx c" style="left:727.5px;width:80.5px;top:701.3px">1129</div>
<div class="tx c" style="left:646.4px;width:81.10000000000002px;top:732.8px">515658.9</div>
<div class="tx c" style="left:727.5px;width:80.5px;top:732.8px">1394</div>
<div class="abs" style="left:844px;top:598px;width:377px;height:173px;border:1px solid #e6e6e6;border-bottom:none;background:#fff"></div>
<div class="abs" style="left:845px;top:599px;width:375px;height:32px;background:#f2f2f2"></div>
<div class="abs" style="left:845px;top:630px;width:375px;height:1px;background:#e6e6e6"></div>
<div class="abs" style="left:845px;top:661px;width:375px;height:1px;background:#e6e6e6"></div>
<div class="abs" style="left:845px;top:693px;width:375px;height:1px;background:#e6e6e6"></div>
<div class="abs" style="left:845px;top:724px;width:375px;height:1px;background:#e6e6e6"></div>
<div class="abs" style="left:845px;top:756px;width:375px;height:1px;background:#e6e6e6"></div>
<div class="abs" style="left:1057.4px;top:598px;width:1px;height:163px;background:#e6e6e6"></div>
<div class="abs" style="left:1138.6px;top:598px;width:1px;height:163px;background:#e6e6e6"></div>
<div class="tx" style="left:857px;top:607px">店铺</div>
<div class="tx c" style="left:1057.4px;width:81.19999999999982px;top:607px">销售额(¥)</div>
<div class="tx c" style="left:1138.6px;width:81.40000000000009px;top:607px">订单数量</div>
<div class="tx c" style="left:1057.4px;width:81.19999999999982px;top:638.3px">345300.03</div>
<div class="tx c" style="left:1138.6px;width:81.40000000000009px;top:638.3px">500</div>
<div class="tx c" style="left:1057.4px;width:81.19999999999982px;top:669.8px">340298.96</div>
<div class="tx c" style="left:1138.6px;width:81.40000000000009px;top:669.8px">435</div>
<div class="tx c" style="left:1057.4px;width:81.19999999999982px;top:701.3px">209001.85</div>
<div class="tx c" style="left:1138.6px;width:81.40000000000009px;top:701.3px">266</div>
<div class="tx c" style="left:1057.4px;width:81.19999999999982px;top:732.8px">199265.69</div>
<div class="tx c" style="left:1138.6px;width:81.40000000000009px;top:732.8px">840</div>
<svg class="abs" style="left:433px;top:625px" width="60" height="136"><path d="M10,22 C10,8 44,6 50,20 C52,40 48,60 46,80 C44,100 46,120 40,130 C30,138 6,138 4,120 C2,90 4,50 10,22Z" fill="#f9f9f9"/></svg>
<div class="abs" style="left:445px;top:641px;width:12px;height:12px;background:#cbcbcb"></div>
<div class="abs" style="left:457px;top:641px;width:12px;height:12px;background:#c4c4c4"></div>
<div class="abs" style="left:469px;top:641px;width:12px;height:12px;background:#c8c8c8"></div>
<div class="abs" style="left:445px;top:653px;width:36px;height:12px;background:#f4f4f4"></div>
<div class="abs" style="left:445px;top:665px;width:12px;height:12px;background:#d8d8d8"></div>
<div class="abs" style="left:457px;top:665px;width:12px;height:12px;background:#d8d8d8"></div>
<div class="abs" style="left:469px;top:665px;width:12px;height:12px;background:#efefef"></div>
<div class="abs" style="left:445px;top:677px;width:12px;height:12px;background:#dcdcdc"></div>
<div class="abs" style="left:457px;top:677px;width:12px;height:12px;background:#dcdcdc"></div>
<div class="abs" style="left:469px;top:677px;width:12px;height:12px;background:#f0f0f0"></div>
<div class="abs" style="left:445px;top:701px;width:12px;height:12px;background:#cdcdcd"></div>
<div class="abs" style="left:457px;top:701px;width:12px;height:12px;background:#cfcfcf"></div>
<div class="abs" style="left:469px;top:701px;width:12px;height:12px;background:#c8c8c8"></div>
<div class="abs" style="left:477px;top:701px;width:3px;height:12px;background:#d0d0d0"></div>
<div class="abs" style="left:445px;top:713px;width:12px;height:12px;background:#f0f0f0"></div>
<div class="abs" style="left:457px;top:713px;width:12px;height:12px;background:#f2f2f2"></div>
<div class="abs" style="left:469px;top:713px;width:12px;height:12px;background:#f2f2f2"></div>
<div class="abs" style="left:445px;top:737px;width:12px;height:12px;background:#d8d8d8"></div>
<div class="abs" style="left:457px;top:737px;width:12px;height:12px;background:#d0d0d0"></div>
<div class="abs" style="left:469px;top:737px;width:12px;height:12px;background:#d4d4d4"></div>
<div class="tx" style="left:478.5px;top:639.5px">6</div>
<div class="tx" style="left:478.5px;top:702px">55</div>
<div class="tx" style="left:478.5px;top:733.5px">66</div>
<div class="tx" style="left:897.6px;top:639.5px">nping(德国)</div>
<div class="tx" style="left:895px;top:670.5px">(德国)</div>
<div class="tx" style="left:895.5px;top:702px">WU(德国)</div>
<div class="tx" style="left:892px;top:733.5px">n(日本)</div>
<svg class="abs" style="left:844px;top:625px" width="60" height="136"><path d="M8,20 C8,0 56,0 57,20 C58,40 52,60 51,80 C50,100 50,115 46,125 C40,140 10,140 6,120 C4,90 6,50 8,20Z" fill="#f9f9f9"/></svg>
<div class="abs" style="left:853px;top:641px;width:12px;height:12px;background:#dcdcdc"></div>
<div class="abs" style="left:865px;top:641px;width:12px;height:12px;background:#d6d6d6"></div>
<div class="abs" style="left:877px;top:641px;width:12px;height:12px;background:#d8d8d8"></div>
<div class="abs" style="left:889px;top:641px;width:12px;height:12px;background:#dadada"></div>
<div class="abs" style="left:853px;top:665px;width:12px;height:12px;background:#e8e8e8"></div>
<div class="abs" style="left:865px;top:665px;width:12px;height:12px;background:#e4e4e4"></div>
<div class="abs" style="left:877px;top:665px;width:12px;height:12px;background:#e8e8e8"></div>
<div class="abs" style="left:853px;top:677px;width:12px;height:12px;background:#eaeaea"></div>
<div class="abs" style="left:865px;top:677px;width:12px;height:12px;background:#e6e6e6"></div>
<div class="abs" style="left:877px;top:677px;width:12px;height:12px;background:#eaeaea"></div>
<div class="abs" style="left:853px;top:701px;width:12px;height:12px;background:#e4e4e4"></div>
<div class="abs" style="left:865px;top:701px;width:12px;height:12px;background:#cccccc"></div>
<div class="abs" style="left:877px;top:701px;width:12px;height:12px;background:#d0d0d0"></div>
<div class="abs" style="left:889px;top:701px;width:6px;height:12px;background:#e0e0e0"></div>
<div class="abs" style="left:853px;top:737px;width:12px;height:12px;background:#e0e0e0"></div>
<div class="abs" style="left:865px;top:737px;width:12px;height:12px;background:#d4d4d4"></div>
<div class="abs" style="left:877px;top:737px;width:12px;height:12px;background:#d8d8d8"></div>
<!-- /BOTTOM CONTENT -->

<!-- SCROLLBAR -->
<div class="abs" style="left:1244px;top:73px;width:9px;height:688px;background:#f1f1f1"></div>
<div class="abs" style="left:1246px;top:89px;width:7px;height:312px;background:#c1c1c1"></div>
<svg class="abs" style="left:1244px;top:73px" width="9" height="688"><path d="M4.8,9.8 L8.5,6 L12.3,9.8Z" fill="#a3a3a3"/><path d="M4.8,683 L8.5,686.8 L12.3,683Z" fill="#505050"/></svg>
</body></html>
